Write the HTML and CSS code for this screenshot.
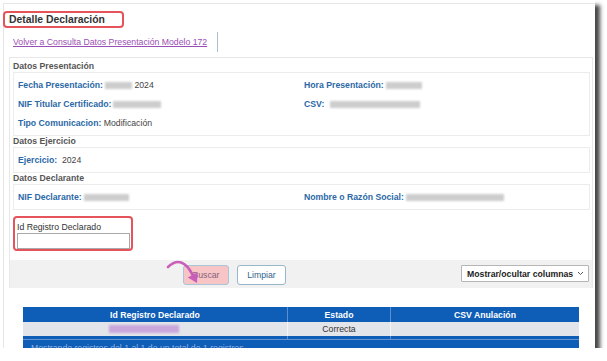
FILE: index.html
```html
<!DOCTYPE html>
<html lang="es">

<head>
  <meta charset="UTF-8">
  <meta name="viewport" content="width=device-width, initial-scale=1.0">
  <title>Detalle Declaración</title>
  <link rel="stylesheet" href="styles.css">
</head>

<body>
  <div class="frame">
    <div class="page">

      <div class="title-bar">
        <h1 class="title">Detalle Declaración</h1>
      </div>

      <div class="nav">
        <a href="#" class="nav-link">Volver a Consulta Datos Presentación Modelo 172</a>
      </div>

      <div class="panel">
        <div class="panel-body">

          <div class="group-title">Datos Presentación</div>
          <div class="group-box">
            <div class="field"><span class="label">Fecha Presentación:</span><span class="blur w27"></span> 2024</div>
            <div class="field"><span class="label">Hora Presentación:</span><span class="blur w36"></span></div>
            <div class="field"><span class="label">NIF Titular Certificado:</span><span class="blur w48"></span></div>
            <div class="field"><span class="label">CSV:</span><span class="blur w90 gap"></span></div>
            <div class="field"><span class="label">Tipo Comunicacion:</span> Modificación</div>
          </div>

          <div class="group-title">Datos Ejercicio</div>
          <div class="group-box">
            <div class="field"><span class="label">Ejercicio:</span>&nbsp; 2024</div>
          </div>

          <div class="group-title">Datos Declarante</div>
          <div class="group-box">
            <div class="field"><span class="label">NIF Declarante:</span><span class="blur w45"></span></div>
            <div class="field"><span class="label">Nombre o Razón Social:</span><span class="blur w98"></span></div>
          </div>

          <div class="search-field">
            <label for="idRegistro">Id Registro Declarado</label>
            <input type="text" id="idRegistro">
          </div>
        </div>

        <div class="toolbar">
          <button class="btn btn-search">Buscar</button>
          <button class="btn btn-clear">Limpiar</button>
          <button class="colvis">
            <span>Mostrar/ocultar columnas</span>
            <svg width="7" height="5" viewBox="0 0 7 5"><path d="M1 1 L3.5 3.5 L6 1" fill="none" stroke="#555" stroke-width="1"/></svg>
          </button>
        </div>
      </div>

      <table class="results">
        <thead>
          <tr>
            <th class="col-id">Id Registro Declarado</th>
            <th class="col-state">Estado</th>
            <th class="col-csv">CSV Anulación</th>
          </tr>
        </thead>
        <tbody>
          <tr>
            <td><span class="blur-purple"></span></td>
            <td>Correcta</td>
            <td></td>
          </tr>
        </tbody>
        <tfoot>
          <tr>
            <td></td>
            <td></td>
            <td></td>
          </tr>
        </tfoot>
      </table>
      <div class="table-info">Mostrando registros del 1 al 1 de un total de 1 registros</div>
    </div>

    <!-- pointer arrow over the search button -->
    <svg class="pointer" width="45" height="35" viewBox="0 0 45 35">
      <path d="M8 12 Q22 -1 32.7 20.1" fill="none" stroke="#c95db9" stroke-width="2.6" stroke-linecap="round"/>
      <polygon points="37,28 37.6,17.2 27.8,22.6" fill="#c95db9"/>
    </svg>
  </div>
</body>

</html>
```

FILE: styles.css
```css
body {
  margin: 0;
  padding: 0;
  background-color: #FFFFFF;
  font-family: "Liberation Sans", Arial, sans-serif;
  font-size: 8.7px;
  color: #333;
}

.frame {
  position: relative;
  width: 595px;
  height: 348px;
  overflow: hidden;
  background-color: #fff;
  box-shadow: 5px 5px 4px rgba(0, 0, 0, 0.72);
}

.page {
  margin: 3px 0 0 3px;
  border-top: 1px solid #e6e6e6;
  border-left: 1px solid #e6e6e6;
  height: 400px;
}

/* Title */
.title-bar {
  display: flex;
  padding-top: 7px;
  margin-left: -1px;
}

.title {
  margin: 0;
  font-size: 10.4px;
  line-height: 13px;
  font-weight: bold;
  color: #333;
  width: 98px;
  padding: 0 15px 0 4px;
  border: 2px solid #e4545a;
  border-radius: 4px;
}

/* Back link */
.nav {
  display: flex;
  margin-top: 4px;
}

.nav-link {
  display: block;
  height: 20px;
  line-height: 20px;
  padding: 0 10px 0 9px;
  border-right: 1px solid #a9bfd4;
  color: #9b4fb4;
  text-decoration: underline;
}

/* Data panel */
.panel {
  margin: 5px 0 0 5px;
  width: 582px;
  border: 1px solid #e8e8e8;
  border-bottom: none;
}

.panel-body {
  padding: 3px 2px 0 3px;
}

.group-title {
  line-height: 11px;
  font-weight: bold;
  color: #555;
}

.group-box {
  display: grid;
  grid-template-columns: 286px 1fr;
  grid-auto-rows: 19px;
  align-items: center;
  padding: 2px 0 3px 4px;
  border: 1px solid #ececec;
  background-color: #fff;
}

.field {
  white-space: nowrap;
  color: #444;
}

.label {
  font-weight: bold;
  color: #2a68a6;
}

.blur {
  display: inline-block;
  height: 7px;
  margin-left: 2px;
  vertical-align: -1px;
  background-color: #cdcdcd;
  filter: blur(0.9px);
}

.blur.gap {
  margin-left: 6px;
}

.w27 { width: 27px; }
.w36 { width: 36px; }
.w45 { width: 45px; }
.w48 { width: 48px; }
.w90 { width: 90px; }
.w98 { width: 98px; }

/* Search field */
.search-field {
  display: flex;
  flex-direction: column;
  width: 113px;
  margin-top: 6px;
  padding: 3px 1px 0 2px;
  border: 2px solid #e4545a;
  border-radius: 4px;
}

.search-field label {
  line-height: 12px;
  color: #333;
}

.search-field input {
  box-sizing: border-box;
  width: 113px;
  height: 16px;
  margin: 0;
  border: 1px solid #a9a9a9;
  background-color: #fff;
}

/* Toolbar */
.toolbar {
  display: flex;
  align-items: flex-start;
  height: 28px;
  box-sizing: border-box;
  margin-top: 9px;
  padding: 5px 3px 0 173px;
  background-color: #f1f1f1;
}

.btn {
  height: 20px;
  padding: 0;
  font-family: inherit;
  font-size: 8.7px;
  border-radius: 3px;
  cursor: pointer;
}

.btn-search {
  width: 46px;
  background-color: #f7c5c5;
  border: 1px solid #a7c7d8;
  color: #86637f;
}

.btn-clear {
  width: 49px;
  margin-left: 8px;
  background-color: #fff;
  border: 1px solid #97b6c8;
  color: #2f5f8c;
}

.colvis {
  display: flex;
  align-items: center;
  justify-content: space-between;
  width: 128px;
  height: 17px;
  margin-left: auto;
  padding: 0 4px 0 5px;
  font-family: inherit;
  font-size: 8.7px;
  font-weight: bold;
  color: #222;
  background-color: #fff;
  border: 1px solid #b5b5b5;
  border-radius: 1px;
}

/* Results table */
.results {
  margin: 19px 0 0 19px;
  width: 556px;
  border-collapse: collapse;
  table-layout: fixed;
}

.results th {
  height: 15px;
  padding: 0;
  background-color: #0e5db6;
  color: #fff;
  font-weight: bold;
  text-align: center;
  border-right: 1px solid #5b8fcf;
}

.results td {
  height: 14px;
  padding: 0;
  background-color: #e2e5e9;
  text-align: center;
  border-right: 1px solid #f4f5f7;
  color: #333;
}

.results th:last-child,
.results td:last-child {
  border-right: none;
}

.results tfoot td {
  height: 3px;
  background-color: #0e5db6;
  border-right: 1px solid #5b8fcf;
}

.col-id { width: 264px; }
.col-state { width: 102px; }

.blur-purple {
  display: inline-block;
  width: 70px;
  height: 8px;
  vertical-align: -1px;
  margin-right: 22px;
  background-color: #c9a6dc;
  filter: blur(0.8px);
}

.table-info {
  margin-left: 19px;
  width: 548px;
  height: 20px;
  padding: 3px 0 0 8px;
  background-color: #0e5db6;
  border-top: 1px solid #5f93d3;
  color: #8fb2e2;
}

/* Pointer arrow */
.pointer {
  position: absolute;
  left: 160px;
  top: 255px;
}
```
